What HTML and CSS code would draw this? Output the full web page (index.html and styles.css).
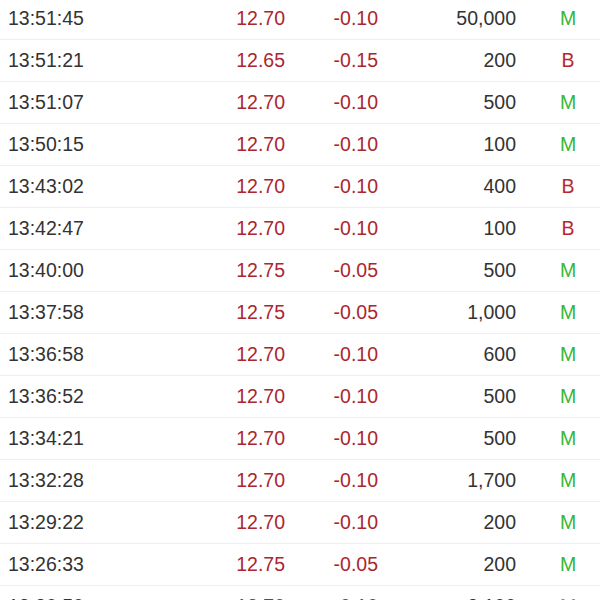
FILE: index.html
```html
<!DOCTYPE html>
<html>
<head>
<meta charset="utf-8">
<link rel="stylesheet" href="styles.css">
</head>
<body>
<div class="list">
  <div class="row"><span class="time">13:51:45</span><span class="price">12.70</span><span class="chg">-0.10</span><span class="vol">50,000</span><span class="flag m">M</span></div>
  <div class="row"><span class="time">13:51:21</span><span class="price">12.65</span><span class="chg">-0.15</span><span class="vol">200</span><span class="flag b">B</span></div>
  <div class="row"><span class="time">13:51:07</span><span class="price">12.70</span><span class="chg">-0.10</span><span class="vol">500</span><span class="flag m">M</span></div>
  <div class="row"><span class="time">13:50:15</span><span class="price">12.70</span><span class="chg">-0.10</span><span class="vol">100</span><span class="flag m">M</span></div>
  <div class="row"><span class="time">13:43:02</span><span class="price">12.70</span><span class="chg">-0.10</span><span class="vol">400</span><span class="flag b">B</span></div>
  <div class="row"><span class="time">13:42:47</span><span class="price">12.70</span><span class="chg">-0.10</span><span class="vol">100</span><span class="flag b">B</span></div>
  <div class="row"><span class="time">13:40:00</span><span class="price">12.75</span><span class="chg">-0.05</span><span class="vol">500</span><span class="flag m">M</span></div>
  <div class="row"><span class="time">13:37:58</span><span class="price">12.75</span><span class="chg">-0.05</span><span class="vol">1,000</span><span class="flag m">M</span></div>
  <div class="row"><span class="time">13:36:58</span><span class="price">12.70</span><span class="chg">-0.10</span><span class="vol">600</span><span class="flag m">M</span></div>
  <div class="row"><span class="time">13:36:52</span><span class="price">12.70</span><span class="chg">-0.10</span><span class="vol">500</span><span class="flag m">M</span></div>
  <div class="row"><span class="time">13:34:21</span><span class="price">12.70</span><span class="chg">-0.10</span><span class="vol">500</span><span class="flag m">M</span></div>
  <div class="row"><span class="time">13:32:28</span><span class="price">12.70</span><span class="chg">-0.10</span><span class="vol">1,700</span><span class="flag m">M</span></div>
  <div class="row"><span class="time">13:29:22</span><span class="price">12.70</span><span class="chg">-0.10</span><span class="vol">200</span><span class="flag m">M</span></div>
  <div class="row"><span class="time">13:26:33</span><span class="price">12.75</span><span class="chg">-0.05</span><span class="vol">200</span><span class="flag m">M</span></div>
  <div class="row"><span class="time">13:20:50</span><span class="price">12.70</span><span class="chg">-0.10</span><span class="vol">2,100</span><span class="flag m">M</span></div>
</div>
</body>
</html>
```
FILE: styles.css
```css
html, body {
  margin: 0;
  padding: 0;
  background: #fff;
  overflow: hidden;
}
body {
  font-family: "Liberation Sans", Arial, sans-serif;
  font-size: 19.5px;
  color: #333;
}
.list {
  margin-top: -2px;
}
.row {
  display: flex;
  align-items: center;
  height: 41px;
  border-bottom: 1px solid #eeeeee;
}
.row > span {
  flex: none;
  box-sizing: border-box;
}
.time {
  padding-left: 8px;
  width: 198px;
}
.price {
  width: 87px;
  text-align: right;
  color: #ab262d;
}
.chg {
  width: 93px;
  text-align: right;
  color: #ab262d;
}
.vol {
  width: 138px;
  text-align: right;
}
.flag {
  width: 84px;
  padding-left: 20px;
  text-align: center;
}
.flag.m { color: #36b736; }
.flag.b { color: #b8282e; }
```
